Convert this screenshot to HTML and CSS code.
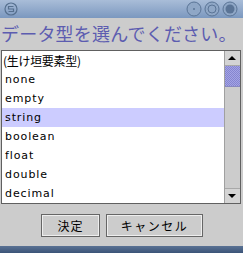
FILE: index.html
```html
<!DOCTYPE html>
<html lang="ja">
<head>
    <meta charset="UTF-8">
    <title>データ型</title>
    <link rel="stylesheet" href="styles.css">
</head>
<body>
<div class="dialog">
    <div class="titlebar">
        <span class="tb-icon">
            <svg width="14" height="14" viewBox="0 0 14 14"><circle cx="7" cy="7" r="6" fill="none" stroke="#56708f" stroke-width="1.2"/><path d="M9.5 4.5 H4.5 V7 H9.5 V9.5 H4.5" fill="none" stroke="#56708f" stroke-width="1.2"/></svg>
        </span>
        <span class="tb-buttons">
            <svg width="16" height="16" viewBox="0 0 16 16"><circle cx="8" cy="8" r="7" fill="#8fa7c6" stroke="#5a7496"/><circle cx="8" cy="8" r="1" fill="#5a7496"/></svg>
            <svg width="16" height="16" viewBox="0 0 16 16"><circle cx="8" cy="8" r="7" fill="#8fa7c6" stroke="#5a7496"/><circle cx="8" cy="8" r="4" fill="none" stroke="#5a7496"/></svg>
            <svg width="16" height="16" viewBox="0 0 16 16"><circle cx="8" cy="8" r="7" fill="#8fa7c6" stroke="#5a7496"/><circle cx="8" cy="8" r="4.5" fill="#5a7496"/></svg>
        </span>
    </div>

    <h1 class="prompt">データ型を選んでください。</h1>

    <div class="listbox">
        <ul class="items">
            <li>(生け垣要素型)</li>
            <li>none</li>
            <li>empty</li>
            <li class="selected">string</li>
            <li>boolean</li>
            <li>float</li>
            <li>double</li>
            <li>decimal</li>
        </ul>
        <div class="scrollbar">
            <div class="arrow up"></div>
            <div class="track">
                <div class="thumb"></div>
            </div>
            <div class="arrow down"></div>
        </div>
    </div>

    <div class="buttons">
        <button class="btn ok">決定</button>
        <button class="btn cancel">キャンセル</button>
    </div>

    <div class="statusbar"></div>
</div>
</body>
</html>
```

FILE: styles.css
```css
html, body {
    margin: 0;
    padding: 0;
    width: 243px;
    height: 253px;
    overflow: hidden;
    background: #cccccc;
}
.dialog {
    display: flex;
    flex-direction: column;
    width: 243px;
    height: 253px;
    font-family: "DejaVu Sans", "Noto Sans CJK JP", sans-serif;
}
.titlebar {
    height: 18px;
    display: flex;
    align-items: center;
    justify-content: space-between;
    padding: 0 5px 0 4px;
    background: linear-gradient(#a9bdd8, #7b98bf);
}
.tb-icon {
    display: flex;
}
.tb-buttons {
    display: flex;
    gap: 2px;
}
.prompt {
    margin: 0;
    height: 32px;
    padding-left: 1px;
    font-family: "Noto Sans CJK JP", sans-serif;
    font-weight: normal;
    font-size: 18px;
    line-height: 30px;
    color: #5c5cb0;
    letter-spacing: 0.2px;
    white-space: nowrap;
}
.listbox {
    margin: 0 2px 0 1px;
    height: 152px;
    display: flex;
    border: 1px solid #606060;
    background: #ffffff;
}
.items {
    flex: 1;
    list-style: none;
    margin: 0;
    padding: 0;
}
.items li {
    height: 19px;
    line-height: 19px;
    padding-left: 3px;
    font-size: 11px;
    letter-spacing: 0.9px;
    color: #000000;
}
.items li:first-child {
    font-family: "Noto Sans CJK JP", sans-serif;
    letter-spacing: -0.3px;
    padding-left: 1px;
    font-size: 12px;
}
.items li.selected {
    background: #ccccff;
}
.scrollbar {
    width: 15px;
    display: flex;
    flex-direction: column;
    border-left: 1px solid #a0a0a0;
    background: #cccccc;
}
.arrow {
    height: 14px;
    position: relative;
    background: #d4d4d4;
    border-bottom: 1px solid #a8a8a8;
}
.arrow.down {
    border-bottom: none;
    border-top: 1px solid #a8a8a8;
}
.arrow::after {
    content: "";
    position: absolute;
    left: 3px;
    top: 5px;
    border-left: 4px solid transparent;
    border-right: 4px solid transparent;
}
.arrow.up::after {
    border-bottom: 4px solid #000;
}
.arrow.down::after {
    border-top: 4px solid #000;
}
.track {
    flex: 1;
}
.thumb {
    height: 20px;
    background-color: #a4a4e4;
    background-image:
        linear-gradient(45deg, rgba(120, 120, 200, 0.7) 25%, transparent 25%, transparent 75%, rgba(120, 120, 200, 0.7) 75%),
        linear-gradient(45deg, rgba(120, 120, 200, 0.7) 25%, transparent 25%, transparent 75%, rgba(120, 120, 200, 0.7) 75%);
    background-size: 2px 2px;
    background-position: 0 0, 1px 1px;
    border-bottom: 1px solid #8888c0;
}
.buttons {
    display: flex;
    justify-content: center;
    gap: 6px;
    padding: 10px 0 0 1px;
    height: 32px;
}
.btn {
    height: 23px;
    padding: 0;
    margin: 0;
    background: #cccccc;
    border: 1px solid #666666;
    box-shadow: inset 1px 1px 0 #eeeeee, inset -1px -1px 0 #eeeeee;
    font-family: "Noto Sans CJK JP", sans-serif;
    font-size: 12px;
    color: #000;
}
.btn.ok {
    width: 59px;
    letter-spacing: 1px;
}
.btn.cancel {
    width: 97px;
    letter-spacing: 1.5px;
}
.statusbar {
    margin-top: auto;
    height: 7px;
    background: linear-gradient(#5a7294, #3b5478);
}
```
